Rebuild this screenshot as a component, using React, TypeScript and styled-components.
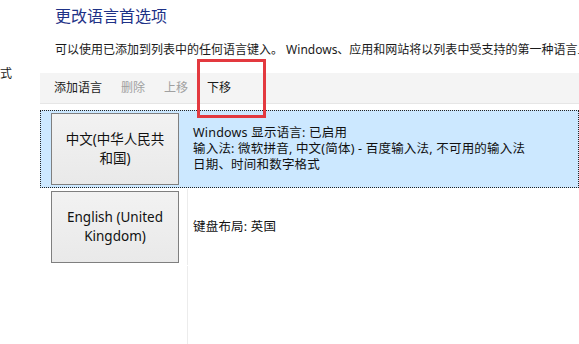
import React from 'react';
import styled, { createGlobalStyle } from 'styled-components';

const GlobalStyle = createGlobalStyle`
  html, body {
    margin: 0;
    padding: 0;
    background: #ffffff;
  }
  body {
    font-family: 'Noto Sans', 'Noto Sans CJK SC', sans-serif;
    color: #1a1a1a;
  }
`;

const Page = styled.div`
  display: flex;
  height: 100vh;
  overflow: hidden;
`;

const Sidebar = styled.div`
  width: 40px;
  flex-shrink: 0;
  padding-top: 66px;
  font-size: 12px;
  line-height: 16px;
  overflow: hidden;
  white-space: nowrap;
`;

const Main = styled.div`
  flex: 1;
  min-width: 0;
  display: flex;
  flex-direction: column;
`;

const Title = styled.h1`
  margin: 0;
  padding: 5px 0 0 15px;
  font-size: 16px;
  line-height: 22px;
  font-weight: 400;
  color: #1e3287;
`;

const Description = styled.p`
  margin: 15px 0 0;
  padding-left: 15px;
  font-size: 12px;
  line-height: 16px;
  white-space: nowrap;
  overflow: hidden;
`;

const Toolbar = styled.div`
  position: relative;
  margin-top: 15px;
  height: 31px;
  box-sizing: border-box;
  display: flex;
  align-items: center;
  gap: 19px;
  padding-left: 14px;
  background: #f4f4f4;
  border-bottom: 1px solid #e6e6e6;
`;

const ToolItem = styled.span<{ $disabled?: boolean }>`
  font-size: 12px;
  line-height: 16px;
  color: ${(p) => (p.$disabled ? '#a0a0a0' : '#1a1a1a')};
`;

// red annotation box drawn over the toolbar
const Highlight = styled.div`
  position: absolute;
  left: 157px;
  top: -14px;
  width: 69px;
  height: 59px;
  box-sizing: border-box;
  border: 3px solid #e3393f;
  pointer-events: none;
`;

const List = styled.div`
  flex: 1;
  display: flex;
  flex-direction: column;
  margin-top: 6px;
`;

const Row = styled.div<{ $selected?: boolean }>`
  display: flex;
  align-items: stretch;
  height: 78px;
  box-sizing: border-box;
  border: 1px ${(p) => (p.$selected ? 'dotted #222' : 'solid transparent')};
  background: ${(p) => (p.$selected ? '#cce8ff' : 'transparent')};
`;

const ButtonCell = styled.div<{ $selected?: boolean }>`
  width: 147px;
  flex-shrink: 0;
  box-sizing: border-box;
  display: flex;
  align-items: center;
  padding-left: 10px;
  border-right: 1px solid ${(p) => (p.$selected ? 'transparent' : '#ececec')};
`;

const LangButton = styled.div`
  width: 128px;
  height: 72px;
  box-sizing: border-box;
  border: 1px solid #7f7f7f;
  background: linear-gradient(#f2f2f2, #e9e9e9);
  display: flex;
  align-items: center;
  justify-content: center;
  text-align: center;
  font-size: 13.5px;
  line-height: 19px;
  color: #111;
`;

const InfoCell = styled.div`
  flex: 1;
  display: flex;
  flex-direction: column;
  justify-content: center;
  padding-left: 5px;
  font-size: 12.5px;
  letter-spacing: 0.2px;
  line-height: 16px;
  white-space: nowrap;
  color: #111;
`;

const Filler = styled.div`
  flex: 1;
  width: 147px;
  margin-left: 1px;
  box-sizing: border-box;
  border-right: 1px solid #ececec;
`;

const App = (): JSX.Element => {
  return (
    <Page>
      <GlobalStyle />
      <Sidebar>式</Sidebar>
      <Main>
        <Title>更改语言首选项</Title>
        <Description>
          可以使用已添加到列表中的任何语言键入。 Windows、应用和网站将以列表中受支持的第一种语言显示。
        </Description>
        <Toolbar>
          <ToolItem>添加语言</ToolItem>
          <ToolItem $disabled>删除</ToolItem>
          <ToolItem $disabled>上移</ToolItem>
          <ToolItem>下移</ToolItem>
          <Highlight />
        </Toolbar>
        <List>
          <Row $selected>
            <ButtonCell $selected>
              <LangButton>
                中文(中华人民共
                <br />
                和国)
              </LangButton>
            </ButtonCell>
            <InfoCell>
              <div>Windows 显示语言: 已启用</div>
              <div>输入法: 微软拼音, 中文(简体) - 百度输入法, 不可用的输入法</div>
              <div>日期、时间和数字格式</div>
            </InfoCell>
          </Row>
          <Row>
            <ButtonCell>
              <LangButton>
                English (United
                <br />
                Kingdom)
              </LangButton>
            </ButtonCell>
            <InfoCell>
              <div>键盘布局: 英国</div>
            </InfoCell>
          </Row>
          <Filler />
        </List>
      </Main>
    </Page>
  );
};

export default App;
